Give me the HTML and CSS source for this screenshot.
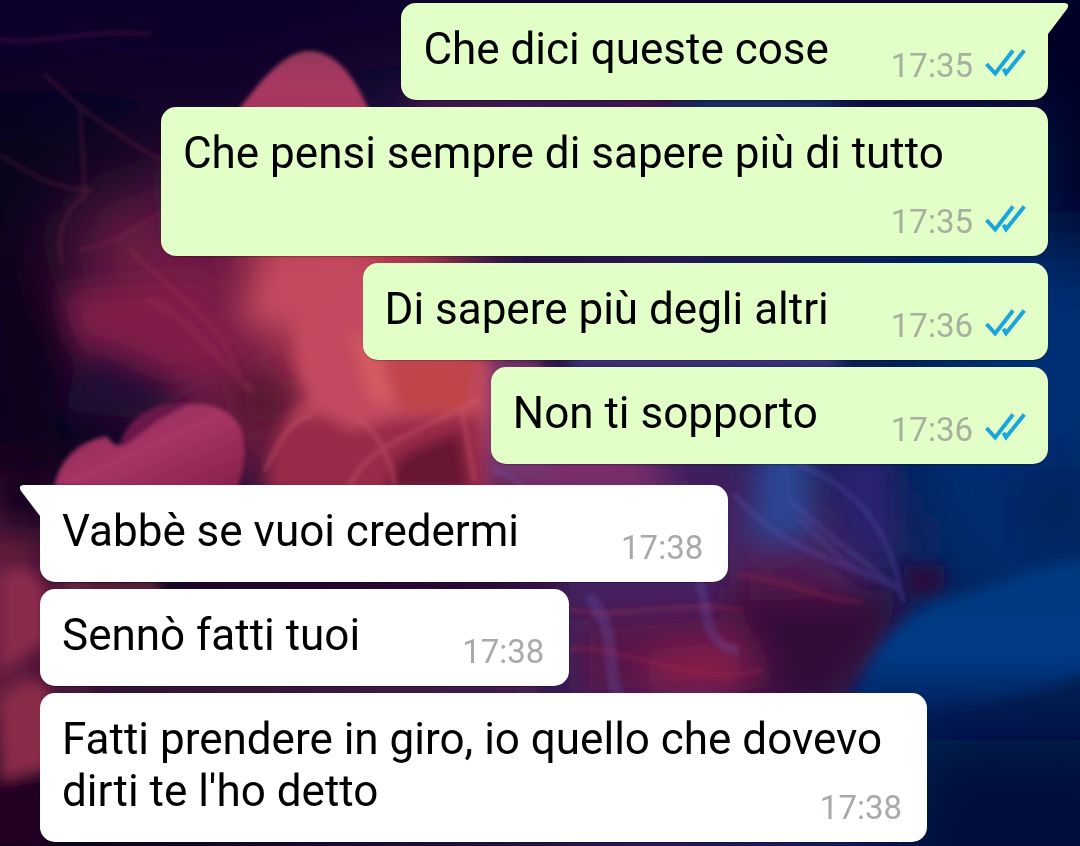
FILE: index.html
```html
<!DOCTYPE html>
<html lang="it">
<head>
<meta charset="utf-8">
<meta name="viewport" content="width=device-width, initial-scale=1">
<title>Chat</title>
<link rel="stylesheet" href="styles.css">
</head>
<body>
<svg class="wallpaper" viewBox="0 0 1080 846" preserveAspectRatio="none" aria-hidden="true">
  <defs>
    <filter id="b40" x="-50%" y="-50%" width="200%" height="200%"><feGaussianBlur stdDeviation="34"/></filter>
    <filter id="b14" x="-50%" y="-50%" width="200%" height="200%"><feGaussianBlur stdDeviation="15"/></filter>
    <filter id="b5" x="-20%" y="-20%" width="140%" height="140%"><feGaussianBlur stdDeviation="7"/></filter>
    <filter id="b2" x="-20%" y="-20%" width="140%" height="140%"><feGaussianBlur stdDeviation="2"/></filter>
    <linearGradient id="base" x1="0" x2="1" y1="0" y2="0">
      <stop offset="0" stop-color="#08041c"/><stop offset=".3" stop-color="#1a0a30"/>
      <stop offset=".6" stop-color="#2a1850"/><stop offset=".85" stop-color="#022058"/><stop offset="1" stop-color="#012050"/>
    </linearGradient>
    <linearGradient id="puff" x1="0" x2="1" y1="0" y2="1">
      <stop offset="0" stop-color="#7a2450"/><stop offset=".5" stop-color="#a83466"/><stop offset="1" stop-color="#842048"/>
    </linearGradient>
    <linearGradient id="peak" x1="0" x2="0" y1="0" y2="1">
      <stop offset="0" stop-color="#8f3a58"/><stop offset=".4" stop-color="#a63860"/><stop offset="1" stop-color="#a83660"/>
    </linearGradient>
    <linearGradient id="cloud" x1="0" x2="0" y1="0" y2="1">
      <stop offset="0" stop-color="#003a80"/><stop offset=".6" stop-color="#003a84"/><stop offset="1" stop-color="#001c58"/>
    </linearGradient>
  </defs>
  <rect width="1080" height="846" fill="url(#base)"/>
  <g filter="url(#b40)">
    <path d="M-60-60H1140V110H640L400 60 220 110 60 90-60 100Z" fill="#07062a"/>
    <path d="M1040-60h120v330h-110z" fill="#020626"/>
    <path d="M60 220L180 180 400 180 520 360 500 520 300 520 130 390Z" fill="#701a44"/>
    <path d="M250 200L420 200 490 300 500 470 330 470 280 330Z" fill="#b43a50"/>
    <path d="M500 440L700 440 880 520 880 700 560 720Z" fill="#44205f"/>
    <path d="M960 260H1140V600H980L920 500Z" fill="#012e74"/>
    <path d="M-60 520L60 500 60 740-60 760Z" fill="#6a1c42"/>
    <path d="M920 740H1140V920H880Z" fill="#010c3a"/>
    <path d="M-60 260L30 260 60 470-60 500Z" fill="#08031a"/>
    <path d="M1010 470h100v80h-90z" fill="#001c52"/>
  </g>
  <g filter="url(#b14)">
    <path d="M680 98H840V112H680Z" fill="#1c58a0"/>
    <path d="M400 98H670V112H420Z" fill="#7a2a68"/>
    <path d="M270 245L380 250 350 340 240 320Z" fill="#c44860"/>
    <path d="M60 290L200 280 260 350 160 390 80 360Z" fill="#801a4a"/>
    <path d="M90 340L190 385 150 420 60 410Z" fill="#240a36"/>
    <path d="M230 370L290 380 290 430 240 430Z" fill="#561232"/>
    <path d="M160 170L260 180 240 250 170 240Z" fill="#3a1440"/>
    <path d="M720 590L900 590 880 650 830 710 720 710Z" fill="#300a38"/>
    <path d="M580 620L740 610 780 690 580 700Z" fill="#581648"/>
    <path d="M650 650L740 640 740 695 650 695Z" fill="#821c4a"/>
    <path d="M760 440H810V540H750Z" fill="#2c4696"/>
    <path d="M830 460L890 450 890 560 850 540Z" fill="#2a2472"/>
    <path d="M740 560L820 570 860 600 740 600Z" fill="#541848"/>
    <path d="M520 455L640 455 680 490 520 490Z" fill="#8a3070"/>
    <path d="M0 470H50V520H0Z" fill="#0a041c"/>
  </g>
  <g filter="url(#b5)">
    <path d="M296 320C300 290 325 270 360 262L450 352 500 362 482 485H270C266 440 290 410 310 400C294 370 292 350 296 320Z" fill="#c2485e"/>
    <path d="M386 360L475 360 470 415 400 410Z" fill="#c04448"/>
    <path d="M350 330L380 350 395 405 370 400Z" fill="#d45c62"/>
    <path d="M275 440C290 410 320 405 350 430L400 418 480 415 490 490H265Z" fill="#9a2c4a"/>
    <path d="M400 455L460 430 470 490H385Z" fill="#681830"/>
    <path d="M850 700C880 640 900 610 960 596C1000 585 1030 565 1100 560V670C1040 690 1000 700 926 710V720H840Z" fill="url(#cloud)"/>
    <path d="M902 565H944V590L908 600Z" fill="#260a40"/>
    <path d="M0 575C20 560 36 570 46 590V642L0 670Z" fill="#8a2a4c"/>
    <path d="M0 700C20 676 45 676 50 690V770L0 780Z" fill="#8a2a4a"/>
    <path d="M-10 780H50V850H-10Z" fill="#240620"/>
    <path d="M490 360L540 360 550 480H485Z" fill="#74356e"/>
    <path d="M60 584H160V592H60Z" fill="#b03c54"/>
    <path d="M180 584H560V592H180Z" fill="#32082c"/>
    <path d="M60 688H540V692H60Z" fill="#a84468"/>
    <path d="M570 350H840V366H570Z" fill="#4a3a8c"/>
  </g>
  <g filter="url(#b2)">
    <path d="M238 110C255 90 278 55 306 51C336 49 355 78 370 112Z" fill="url(#peak)"/>
    <path d="M54 486C62 455 80 442 106 436L116 446C140 432 152 412 182 405C220 398 246 420 244 446C246 465 240 475 238 490Z" fill="url(#puff)"/>
    <path d="M120 444C128 415 160 400 190 403L170 414C148 424 136 442 120 447Z" fill="#6a1848"/>
  </g>
  <g fill="none" stroke-linecap="round" filter="url(#b2)">
    <g stroke="#a03058" stroke-width="4" opacity=".22">
      <path d="M0 40C50 45 70 30 150 34"/><path d="M45 75C80 110 110 130 160 160"/>
      <path d="M0 155C40 180 60 190 90 190C66 210 54 230 62 262"/><path d="M80 250C120 245 140 220 170 210"/>
      <path d="M150 300C190 320 210 350 250 390" stroke-width="9"/><path d="M80 110C82 150 85 170 84 200"/>
      <path d="M130 250C180 300 220 320 240 375" stroke-width="6"/>
    </g>
    <g stroke="#d8647a" stroke-width="5" opacity=".3">
      <path d="M350 485C365 450 400 440 478 400"/><path d="M360 420C380 435 390 460 395 485"/><path d="M462 410L474 480"/>
      <path d="M265 470C280 440 290 420 310 416"/>
    </g>
    <g stroke="#6a62c0" stroke-width="5" opacity=".25">
      <path d="M495 470C510 475 520 484 530 490"/><path d="M735 495C780 550 840 560 900 590"/><path d="M790 500C820 530 850 550 898 590"/>
      <path d="M800 520C830 550 860 580 900 585"/><path d="M592 600C620 640 605 670 618 695" stroke-width="12"/>
      <path d="M700 585C710 610 700 640 735 650" stroke-width="10"/><path d="M800 465C860 490 890 530 903 600"/>
    </g>
    <g stroke="#b02c50" stroke-width="6" opacity=".22">
      <path d="M570 610C620 620 680 600 740 610"/><path d="M740 575C790 580 820 600 860 602"/><path d="M570 650C610 640 700 690 760 670"/>
    </g>
  </g>
</svg>

<main class="chat">
  <section class="group group-out" aria-label="Messaggi inviati">
    <article class="bubble">
      <svg class="tail" viewBox="0 0 22 32" aria-hidden="true"><path d="M0 0H18Q23 1 20 6L1 31H0Z"/></svg>
      <p class="text">Che dici queste cose<span class="meta"><time>17:35</time><svg class="ticks" viewBox="0 0 42 33" role="img" aria-label="Letto"><path d="M2.5 18L11.2 27.5 29 4.5M19.5 22.8L22 27.2 40.3 4.5"/></svg></span></p>
    </article>
    <article class="bubble">
      <p class="text">Che pensi sempre di sapere più di tutto<span class="meta"><time>17:35</time><svg class="ticks" viewBox="0 0 42 33" role="img" aria-label="Letto"><path d="M2.5 18L11.2 27.5 29 4.5M19.5 22.8L22 27.2 40.3 4.5"/></svg></span></p>
    </article>
    <article class="bubble">
      <p class="text">Di sapere più degli altri<span class="meta"><time>17:36</time><svg class="ticks" viewBox="0 0 42 33" role="img" aria-label="Letto"><path d="M2.5 18L11.2 27.5 29 4.5M19.5 22.8L22 27.2 40.3 4.5"/></svg></span></p>
    </article>
    <article class="bubble">
      <p class="text">Non ti sopporto<span class="meta meta-wide"><time>17:36</time><svg class="ticks" viewBox="0 0 42 33" role="img" aria-label="Letto"><path d="M2.5 18L11.2 27.5 29 4.5M19.5 22.8L22 27.2 40.3 4.5"/></svg></span></p>
    </article>
  </section>
  <section class="group group-in" aria-label="Messaggi ricevuti">
    <article class="bubble">
      <svg class="tail" viewBox="0 0 22 32" aria-hidden="true"><path d="M22 0H4Q-1 1 2 6L21 31H22Z"/></svg>
      <p class="text">Vabbè se vuoi credermi<span class="meta"><time>17:38</time></span></p>
    </article>
    <article class="bubble">
      <p class="text">Sennò fatti tuoi<span class="meta"><time>17:38</time></span></p>
    </article>
    <article class="bubble">
      <p class="text">Fatti prendere in giro, io quello che dovevo dirti te l'ho detto<span class="meta"><time>17:38</time></span></p>
    </article>
  </section>
</main>
</body>
</html>
```

FILE: styles.css
```css
* {
  box-sizing: border-box;
}

body {
  margin: 0;
  background: #0b0824;
  font-family: Roboto, "Liberation Sans", sans-serif;
}

.wallpaper {
  position: fixed;
  inset: 0;
  z-index: -1;
  width: 100%;
  height: 100%;
}

.chat {
  display: flex;
  flex-direction: column;
  gap: 21px;
  padding: 3px 32px 4px 40px;
}

.group {
  display: flex;
  flex-direction: column;
  gap: 7px;
}

.group-out {
  --bubble: #e1ffc7;
  align-items: flex-end;
}

.group-in {
  --bubble: #ffffff;
  align-items: flex-start;
}

.bubble {
  position: relative;
  max-width: 88%;
  padding: 20px 22px 15px;
  border-radius: 15px;
  background: var(--bubble);
  box-shadow: 0 1px 1px rgba(0, 0, 0, 0.25);
}

.group-in .bubble {
  padding-right: 25px;
}

.group-out .bubble:first-child {
  border-top-right-radius: 0;
}

.group-in .bubble:first-child {
  border-top-left-radius: 0;
}

.text {
  display: flow-root;
  margin: 0;
  color: #000;
  font-size: 44px;
  line-height: 52px;
}

.meta {
  float: right;
  display: flex;
  gap: 11px;
  margin-top: 23px;
  margin-left: 62px;
  color: #a6aaa8;
  font-size: 33px;
  line-height: 39px;
}

.meta-wide {
  margin-left: 73px;
}

.group-out .meta {
  color: #a6b09f;
}

.group-in .meta {
  margin-left: 102px;
}

.ticks {
  width: 42px;
  height: 33px;
  fill: none;
  stroke: #1ba5dd;
  stroke-width: 4;
}

.tail {
  position: absolute;
  top: 0;
  width: 22px;
  height: 32px;
  fill: var(--bubble);
}

.group-out .tail {
  left: calc(100% - 1px);
}

.group-in .tail {
  right: calc(100% - 1px);
}
```
